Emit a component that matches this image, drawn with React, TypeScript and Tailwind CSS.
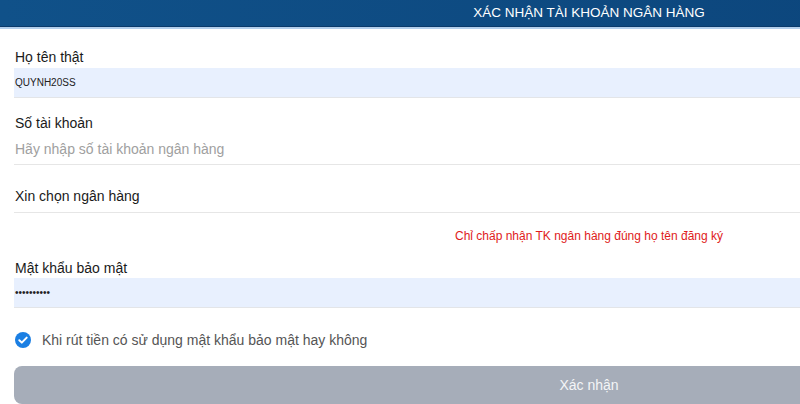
import React from 'react';

function CheckCircle() {
  return (
    <svg width="16" height="16" viewBox="0 0 16 16" aria-hidden="true">
      <circle cx="8" cy="8" r="8" fill="#1b7fe3" />
      <path d="M4.3 8.2l2.5 2.4 4.9-5" fill="none" stroke="#fff" strokeWidth="2" strokeLinecap="round" strokeLinejoin="round" />
    </svg>
  );
}

export default function App() {
  return (
    <div className="w-[800px] h-[404px] overflow-hidden bg-white font-['Liberation_Sans',Arial,sans-serif]">
      <div className="w-[1178px]">
        {/* Header */}
        <div className="h-[27px] bg-gradient-to-r from-[#105189] to-[#0b4278] border-b border-[#0a3a6b] flex items-center justify-center text-white text-[13.5px] uppercase">
          Xác nhận tài khoản ngân hàng
        </div>
        <div className="h-[2px] bg-[#b3cfec]" />

        <div className="px-[14px]">
          {/* Họ tên thật */}
          <div className="mt-[18px] pl-px text-[14px] leading-[20px] text-[#1a1a1a]">Họ tên thật</div>
          <div className="mt-px h-[30px] bg-[#e8f0fe] border-b border-[#e3e5e8] flex items-center pl-px text-[10px] text-[#222]">
            QUYNH20SS
          </div>

          {/* Số tài khoản */}
          <div className="mt-[15px] pl-px text-[14px] leading-[20px] text-[#1a1a1a]">Số tài khoản</div>
          <div className="mt-px h-[31px] border-b border-[#e6e6e6] flex items-center pl-px text-[14px] text-[#a0a0a0]">
            Hãy nhập số tài khoản ngân hàng
          </div>

          {/* Chọn ngân hàng */}
          <div className="h-[48px] border-b border-[#e6e6e6] flex items-end pb-[6px] pl-px text-[14px] leading-[20px] text-[#1a1a1a]">
            Xin chọn ngân hàng
          </div>

          <div className="mt-[15px] text-center text-[12px] leading-[16px] text-[#e01b1b]">
            Chỉ chấp nhận TK ngân hàng đúng họ tên đăng ký
          </div>

          {/* Mật khẩu bảo mật */}
          <div className="mt-[14px] pl-px text-[14px] leading-[20px] text-[#1a1a1a]">Mật khẩu bảo mật</div>
          <div className="h-[30px] bg-[#e8f0fe] border-b border-[#e3e5e8] flex items-center pl-px text-[10px] text-[#222]">
            ••••••••••
          </div>

          {/* Checkbox */}
          <div className="mt-[22px] h-[20px] flex items-center gap-[11px] pl-px text-[14px] text-[#555]">
            <CheckCircle />
            <span>Khi rút tiền có sử dụng mật khẩu bảo mật hay không</span>
          </div>

          <button className="mt-[16px] w-full h-[38px] rounded-lg bg-[#a6adb9] text-[#f4f5f7] text-[14px] flex items-center justify-center">
            Xác nhận
          </button>
        </div>
      </div>
    </div>
  );
}
